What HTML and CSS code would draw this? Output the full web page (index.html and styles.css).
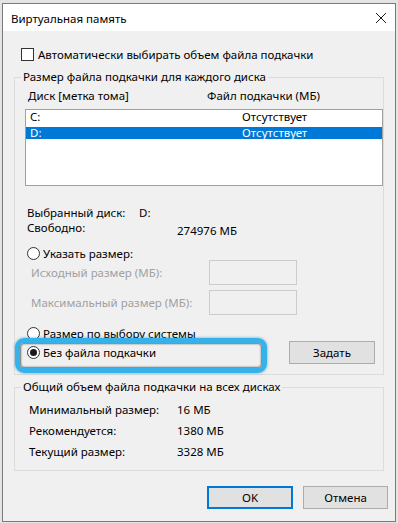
FILE: index.html
```html
<!DOCTYPE html>
<html lang="ru">
<head>
    <meta charset="UTF-8">
    <meta name="viewport" content="width=device-width, initial-scale=1.0">
    <title>Виртуальная память</title>
    <link rel="stylesheet" href="styles.css">
</head>
<body>
    <div class="window">
        <div class="titlebar">
            <span class="title">Виртуальная память</span>
            <svg class="close" width="12" height="12" viewBox="0 0 12 12">
                <path d="M1 1 L11 11 M11 1 L1 11" stroke="#1a1a1a" stroke-width="1" fill="none"/>
            </svg>
        </div>

        <div class="content">
            <div class="check-row">
                <span class="checkbox"></span>
                <span>Автоматически выбирать объем файла подкачки</span>
            </div>

            <fieldset class="group group-disks">
                <legend>Размер файла подкачки для каждого диска</legend>

                <div class="list-head">
                    <span class="head-disk">Диск [метка тома]</span>
                    <span>Файл подкачки (МБ)</span>
                </div>

                <div class="listbox">
                    <div class="list-row">
                        <span class="row-disk">C:</span>
                        <span>Отсутствует</span>
                    </div>
                    <div class="list-row selected">
                        <span class="row-disk">D:</span>
                        <span>Отсутствует</span>
                    </div>
                </div>

                <div class="info-row first">
                    <span class="info-label short">Выбранный диск:</span>
                    <span>D:</span>
                </div>
                <div class="info-row">
                    <span class="info-label">Свободно:</span>
                    <span class="free-value">274976 МБ</span>
                </div>

                <div class="radio-row custom">
                    <span class="radio"></span>
                    <span>Указать размер:</span>
                </div>
                <div class="size-row">
                    <span class="size-label">Исходный размер (МБ):</span>
                    <span class="size-input"></span>
                </div>
                <div class="size-row">
                    <span class="size-label">Максимальный размер (МБ):</span>
                    <span class="size-input"></span>
                </div>

                <div class="radio-row system">
                    <span class="radio"></span>
                    <span>Размер по выбору системы</span>
                </div>
                <div class="radio-row nofile">
                    <span class="radio checked"></span>
                    <span>Без файла подкачки</span>
                    <button class="btn btn-set">Задать</button>
                    <span class="highlight"></span>
                </div>
            </fieldset>

            <fieldset class="group group-total">
                <legend>Общий объем файла подкачки на всех дисках</legend>
                <div class="total-row">
                    <span class="total-label">Минимальный размер:</span>
                    <span>16 МБ</span>
                </div>
                <div class="total-row">
                    <span class="total-label">Рекомендуется:</span>
                    <span>1380 МБ</span>
                </div>
                <div class="total-row">
                    <span class="total-label">Текущий размер:</span>
                    <span>3328 МБ</span>
                </div>
            </fieldset>

            <div class="dialog-buttons">
                <button class="btn btn-ok">OK</button>
                <button class="btn btn-cancel">Отмена</button>
            </div>
        </div>
    </div>
</body>
</html>
```

FILE: styles.css
```css
* {
    margin: 0;
    padding: 0;
    box-sizing: border-box;
}

body {
    font-family: 'Noto Sans', 'Open Sans', sans-serif;
    font-size: 11.5px;
    color: #000;
    background-color: #e4e4e4;
    width: 398px;
    height: 523px;
    overflow: hidden;
}

.window {
    margin: 3px 0 0 2px;
    width: 394px;
    height: 519px;
    border: 1px solid #7a7a7a;
    background-color: #f0f0f0;
    display: flex;
    flex-direction: column;
}

/* title bar */
.titlebar {
    height: 27px;
    background-color: #ffffff;
    display: flex;
    align-items: center;
    justify-content: space-between;
    padding: 0 8px 0 8px;
}

.title {
    padding-top: 2px;
}

.close {
    margin-top: 1px;
}

.content {
    flex: 1;
    display: flex;
    flex-direction: column;
    padding: 15px 7px 0 11px;
}

/* checkbox */
.check-row {
    height: 16px;
    display: flex;
    align-items: center;
    gap: 4px;
    padding-left: 7px;
}

.checkbox {
    width: 13px;
    height: 13px;
    border: 1px solid #333;
    background-color: #fff;
}

/* group boxes */
.group {
    border: 1px solid #dcdcdc;
    margin-right: 4px;
    min-width: 0;
}

.group legend {
    margin-left: 6px;
    padding: 0 2px;
    line-height: 16px;
}

.group-disks {
    margin-top: 7px;
    padding: 0 0 10px 0;
}

.list-head {
    display: flex;
    height: 14px;
    line-height: 14px;
    margin-top: 4px;
    padding-left: 13px;
}

.head-disk {
    width: 179px;
}

.listbox {
    margin: 6px 0 0 10px;
    height: 77px;
    background-color: #fff;
    border: 1px solid #a0a0a0;
    padding-top: 1px;
}

.list-row {
    display: flex;
    height: 12px;
    line-height: 12px;
    margin-bottom: 4px;
    padding-left: 4px;
}

.row-disk {
    width: 212px;
}

.list-row.selected {
    background-color: #0078d7;
    color: #fff;
}

.info-row {
    display: flex;
    height: 15px;
    line-height: 14px;
    padding-left: 12px;
}

.info-row.first {
    margin-top: 20px;
}

.info-label {
    width: 150px;
}

.info-label.short {
    width: 112px;
}

.free-value {
    padding-top: 3px;
}

/* radios */
.radio-row {
    display: flex;
    align-items: center;
    gap: 3px;
    padding-left: 12px;
    height: 14px;
    position: relative;
}

.radio {
    width: 13px;
    height: 13px;
    border: 1px solid #333;
    border-radius: 50%;
    background-color: #fff;
    display: flex;
    align-items: center;
    justify-content: center;
}

.radio.checked::after {
    content: '';
    width: 7px;
    height: 7px;
    border-radius: 50%;
    background-color: #1a1a1a;
}

.radio-row.custom {
    margin-top: 10px;
}

.radio-row.system {
    margin-top: 11px;
}

.radio-row.nofile {
    height: 23px;
    margin-top: 1px;
}

.size-row {
    display: flex;
    align-items: center;
    height: 25px;
    padding-left: 16px;
    margin-bottom: 5px;
    color: #a0a0a0;
}

.size-row:last-of-type {
    margin-bottom: 0;
}

.size-label {
    width: 178px;
}

.size-input {
    width: 88px;
    height: 25px;
    border: 1px solid #cccccc;
    background-color: #f0f0f0;
}

/* buttons */
.btn {
    font-family: inherit;
    font-size: 11.5px;
    color: #000;
    background-color: #e1e1e1;
    border: 1px solid #adadad;
    height: 23px;
    cursor: default;
}

.btn-set {
    margin-left: auto;
    margin-right: 8px;
    width: 86px;
}

/* annotation around the selected option */
.highlight {
    position: absolute;
    left: 0;
    top: -3px;
    width: 252px;
    height: 35px;
    border: 5px solid #35b2ea;
    border-radius: 9px;
    box-shadow: 0 0 3px rgba(20, 110, 170, 0.6), inset 0 0 2px 1px rgba(0, 0, 0, 0.55);
    pointer-events: none;
}

.group-total {
    margin-top: 4px;
    padding: 4px 0 8px 0;
}

.total-row {
    display: flex;
    height: 21px;
    line-height: 21px;
    padding-left: 14px;
}

.total-label {
    width: 148px;
}

.dialog-buttons {
    display: flex;
    justify-content: flex-end;
    gap: 10px;
    margin-top: 15px;
}

.btn-ok {
    width: 86px;
    border: 2px solid #0078d7;
}

.btn-cancel {
    width: 85px;
}
```
